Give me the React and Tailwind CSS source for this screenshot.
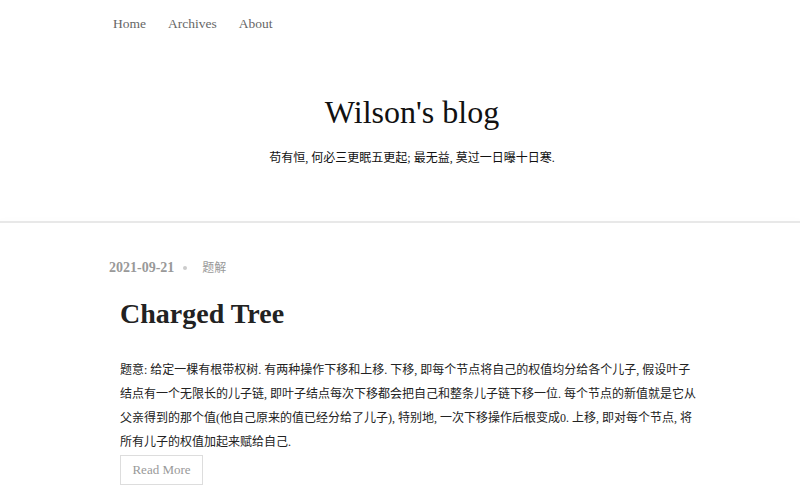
export default function App() {
  const font = "font-['Liberation_Serif','Noto_Sans_CJK_SC',serif]";
  return (
    <div className={`min-h-screen bg-white ${font}`}>
      <header>
        <div className="ml-[109px] w-[606px]">
          <nav className="pt-[14px] pl-[4px] flex gap-[22px] text-[13.5px] leading-[20px] text-[#666]">
            <a href="#">Home</a>
            <a href="#">Archives</a>
            <a href="#">About</a>
          </nav>
          <h1 className="mt-[58px] text-[32px] leading-[40px] text-center text-[#111]">Wilson's blog</h1>
          <p className="mt-[16px] text-[12px] leading-[20px] text-center text-[#111]">
            苟有恒, 何必三更眠五更起; 最无益, 莫过一日曝十日寒.
          </p>
        </div>
      </header>
      <div className="mt-[53px] h-[2px] bg-[#e8e8e8] shadow-[0_-2px_4px_rgba(0,0,0,0.02)]" />
      <main className="ml-[109px] w-[606px]">
        <div className="mt-[35px] flex items-center text-[12px] leading-[20px] text-[#999]">
          <span className="font-bold text-[14px]">2021-09-21</span>
          <span className="ml-[9px] w-[4px] h-[4px] rounded-full bg-[#ccc]" />
          <span className="ml-[15px]">题解</span>
        </div>
        <article className="pl-[11px]">
          <h2 className="mt-[18px] text-[28px] leading-[36px] font-bold text-[#222]">Charged Tree</h2>
          <p className="mt-[26px] text-[12px] leading-[24px] text-[#222] whitespace-nowrap">
            题意: 给定一棵有根带权树. 有两种操作下移和上移. 下移, 即每个节点将自己的权值均分给各个儿子, 假设叶子
            <br />
            结点有一个无限长的儿子链, 即叶子结点每次下移都会把自己和整条儿子链下移一位. 每个节点的新值就是它从
            <br />
            父亲得到的那个值(他自己原来的值已经分给了儿子), 特别地, 一次下移操作后根变成0. 上移, 即对每个节点, 将
            <br />
            所有儿子的权值加起来赋给自己.
          </p>
          <a href="#" className="mt-[1px] inline-flex items-center justify-center w-[83px] h-[30px] border border-[#ddd] text-[13px] text-[#999]">
            Read More
          </a>
        </article>
      </main>
    </div>
  );
}
